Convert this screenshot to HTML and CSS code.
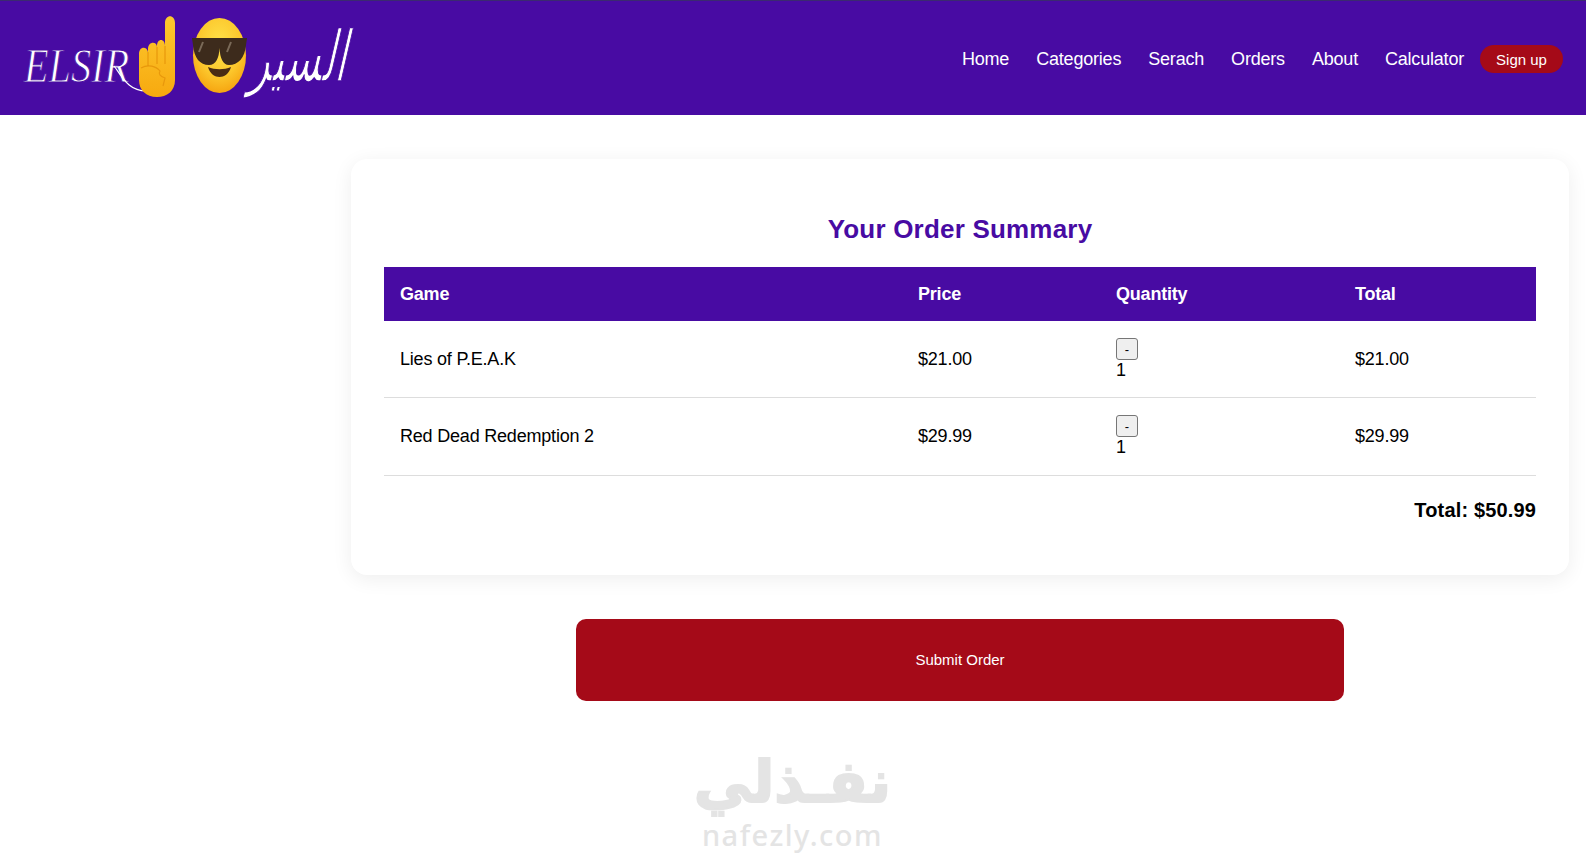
FILE: index.html
```html
<!DOCTYPE html>
<html lang="en">
<head>
<meta charset="utf-8">
<title>Your Order Summary</title>
<link rel="stylesheet" href="styles.css">
</head>
<body>
<header class="topbar">
  <svg class="logo" viewBox="0 0 380 115" width="380" height="115" role="img" aria-label="ELSIR">
    <defs>
      <linearGradient id="handFill" x1="0" y1="0" x2="0" y2="1">
        <stop offset="0" stop-color="#fdc92f"/>
        <stop offset="1" stop-color="#f7a90f"/>
      </linearGradient>
      <radialGradient id="faceFill" cx="0.5" cy="0.35" r="0.7">
        <stop offset="0" stop-color="#fee24a"/>
        <stop offset="0.6" stop-color="#fcc72c"/>
        <stop offset="1" stop-color="#f59e0b"/>
      </radialGradient>
    </defs>
    <text class="logo-latin" transform="translate(24 82) scale(0.84 1)">ELSIR</text>
    <path class="logo-line" d="M114 66 C122 76 128 91 146 91"/>
    <path class="hand" d="M165 23 C165 14 175 14 175 23 L175 80 C175 91 167 97 157 97 C146 97 139 90 139 80 L139 54 C139 46 147 46 148 52 L148 49 C148 41 157 41 157 47 L157 46 C157 38 165 38 165 46 Z"/>
    <path class="hand-line" d="M148 52 L148 66 M157 47 L157 64 M165 46 L165 64 M141 68 C148 64 156 66 160 71 C158 74 160 76 165 78 L163 86"/>
    <ellipse class="face" cx="219.500" cy="55.500" rx="26.500" ry="37.500"/>
    <path class="shades" d="M192 38 L247 38 L246 45 C245 58 238 65 229 65 C223 65 220 58 219.500 48 C219 58 216 65 209 65 C200 65 194 58 193 45 Z"/>
    <path class="shine" d="M203 42 L199 52 M231 42 L227 52"/>
    <path class="mouth" d="M208 67 C215 70 224 70 231 67 C229 74 224 77 219.500 77 C215 77 210 74 208 67 Z"/>
    <text class="logo-arabic" transform="translate(345 81) skewX(-13) scale(0.94 1.6)" direction="rtl">السير</text>
  </svg>
  <nav class="nav">
    <a class="nav-link" href="#">Home</a>
    <a class="nav-link" href="#">Categories</a>
    <a class="nav-link" href="#">Serach</a>
    <a class="nav-link" href="#">Orders</a>
    <a class="nav-link" href="#">About</a>
    <a class="nav-link" href="#">Calculator</a>
    <a class="signup" href="#">Sign up</a>
  </nav>
</header>

<main class="content">
  <section class="card">
    <h1 class="card-title">Your Order Summary</h1>
    <table class="orders">
      <colgroup>
        <col class="col-game"><col class="col-price"><col class="col-qty"><col class="col-total">
      </colgroup>
      <thead>
        <tr><th>Game</th><th>Price</th><th>Quantity</th><th>Total</th></tr>
      </thead>
      <tbody>
        <tr>
          <td>Lies of P.E.A.K</td>
          <td>$21.00</td>
          <td class="qty"><button class="qty-btn" type="button">-</button><span class="qty-num">1</span></td>
          <td>$21.00</td>
        </tr>
        <tr>
          <td>Red Dead Redemption 2</td>
          <td>$29.99</td>
          <td class="qty"><button class="qty-btn" type="button">-</button><span class="qty-num">1</span></td>
          <td>$29.99</td>
        </tr>
      </tbody>
    </table>
    <p class="grand-total">Total: $50.99</p>
  </section>
  <button class="submit" type="button">Submit Order</button>
</main>

<div class="watermark">
  <div class="wm-ar" dir="rtl">نفـذلي</div>
  <div class="wm-en">nafezly.com</div>
</div>
</body>
</html>
```

FILE: styles.css
```css
* { box-sizing: border-box; }
html, body { height: 100%; }
body {
  margin: 0;
  background: #fff;
  font-family: "Liberation Sans", Arial, sans-serif;
  color: #000;
  overflow: hidden;
  position: relative;
}
.topbar {
  height: 115px;
  background: #480ba3;
  border-top: 1px solid #3b2a70;
  display: flex;
  justify-content: space-between;
  align-items: flex-start;
  padding-right: 23px;
}
.logo { display: block; margin-top: -1px; flex: none; }
.logo-latin {
  font-family: "Liberation Serif", serif;
  font-style: italic;
  font-size: 48px;
  fill: #fff;
  stroke: #480ba3;
  stroke-width: 0.9;
}
.logo-line { fill: none; stroke: #fff; stroke-width: 1.2; }
.logo-arabic {
  font-family: "DejaVu Sans", sans-serif;
  font-size: 44px;
  fill: #fff;
  stroke: #480ba3;
  stroke-width: 0.9;
}
.hand { fill: url(#handFill); }
.hand-line { fill: none; stroke: #e8980c; stroke-width: 1.2; }
.face { fill: url(#faceFill); }
.shades { fill: #3d2b1c; }
.shine { fill: none; stroke: #7a6a58; stroke-width: 2; }
.mouth { fill: #4a2c14; }
.nav {
  display: flex;
  align-items: center;
  gap: 27px;
  margin-top: 44px;
}
.nav-link {
  color: #fff;
  text-decoration: none;
  font-size: 18px;
  letter-spacing: -0.2px;
}
.signup {
  margin-left: -11px;
  width: 83px;
  height: 28px;
  border-radius: 14px;
  background: #a50a18;
  color: #fff;
  text-decoration: none;
  font-size: 15px;
  display: flex;
  align-items: center;
  justify-content: center;
  padding-top: 1px;
}
.content {
  display: flex;
  flex-direction: column;
  align-items: center;
  padding: 44px 17px 0 351px;
}
.card {
  width: 100%;
  height: 416px;
  background: #fff;
  border-radius: 16px;
  box-shadow: 0 4px 20px rgba(0, 0, 0, 0.07);
  padding: 53px 33px 0;
}
.card-title {
  margin: 0 0 21px;
  text-align: center;
  color: #480ba3;
  font-size: 26px;
  line-height: 34px;
  letter-spacing: 0.2px;
}
.orders {
  width: 100%;
  table-layout: fixed;
  border-collapse: collapse;
  font-size: 18px;
  letter-spacing: -0.2px;
}
.col-game { width: 518px; }
.col-price { width: 198px; }
.col-qty { width: 239px; }
.col-total { width: 197px; }
.orders th {
  background: #480ba3;
  color: #fff;
  height: 54px;
  padding: 0 16px;
  text-align: left;
  font-weight: 700;
}
.orders td {
  padding: 17px 16px;
  border-bottom: 1px solid #ddd;
  line-height: 20px;
}
.orders tr:last-child td { padding-bottom: 18px; }
.qty-btn {
  display: block;
  width: 22px;
  height: 22px;
  padding: 0;
  font: 13px "Liberation Sans", Arial, sans-serif;
  background: #efefef;
  border: 1px solid #767676;
  border-radius: 3px;
  color: #000;
}
.qty-num { display: block; }
.grand-total {
  margin: 23px 0 0;
  text-align: right;
  font-size: 20px;
  font-weight: 700;
  letter-spacing: 0.15px;
}
.submit {
  width: 768px;
  height: 82px;
  margin-top: 44px;
  padding: 0 0 2px;
  background: #a50a18;
  color: #fff;
  border: 0;
  border-radius: 10px;
  font: 15px "Liberation Sans", Arial, sans-serif;
}
.watermark {
  position: absolute;
  left: 690px;
  top: 745px;
  width: 205px;
  text-align: center;
  color: #e4e4e4;
}
.wm-ar {
  font-family: "DejaVu Sans", sans-serif;
  font-weight: 700;
  font-size: 58px;
  line-height: 74px;
  -webkit-text-stroke: 2px #e4e4e4;
}
.wm-en {
  font-family: "Noto Sans", sans-serif;
  font-weight: 500;
  font-size: 29px;
  line-height: 32px;
  letter-spacing: 1.5px;
}
```
